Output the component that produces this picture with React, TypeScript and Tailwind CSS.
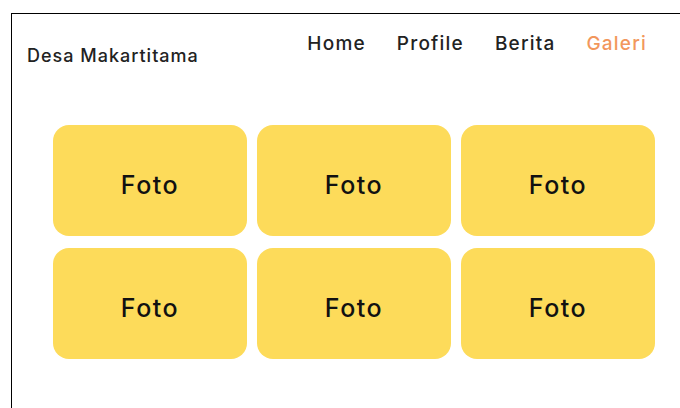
const links = [
  { label: "Home", active: false },
  { label: "Profile", active: false },
  { label: "Berita", active: false },
  { label: "Galeri", active: true },
];

const photos = Array.from({ length: 6 }, (_, i) => i);

export default function App() {
  return (
    <div className="min-h-screen bg-white font-['Inter',sans-serif] pt-[13px] pl-[11px]">
      <div className="min-h-[395px] border-l border-t border-black">
        <header className="flex items-start justify-between pl-[15px] pr-[33px]">
          <h1 className="mt-[28px] text-[18px] font-medium tracking-[1px] text-[#222]">
            Desa Makartitama
          </h1>
          <nav className="mt-[16px] flex gap-[31px] text-[19px] font-medium tracking-[1.2px]">
            {links.map((l) => (
              <a
                key={l.label}
                href="#"
                className={l.active ? "text-[#f2975c]" : "text-[#222]"}
              >
                {l.label}
              </a>
            ))}
          </nav>
        </header>

        <main className="mt-[56px] ml-[41px] grid w-[602px] grid-cols-3 gap-x-[10px] gap-y-[12px]">
          {photos.map((i) => (
            <div
              key={i}
              className="flex h-[111px] items-center justify-center rounded-[16px] bg-[#fddb5a] pt-[10px] text-[25px] font-medium tracking-[1.5px] text-[#111]"
            >
              Foto
            </div>
          ))}
        </main>
      </div>
    </div>
  );
}
